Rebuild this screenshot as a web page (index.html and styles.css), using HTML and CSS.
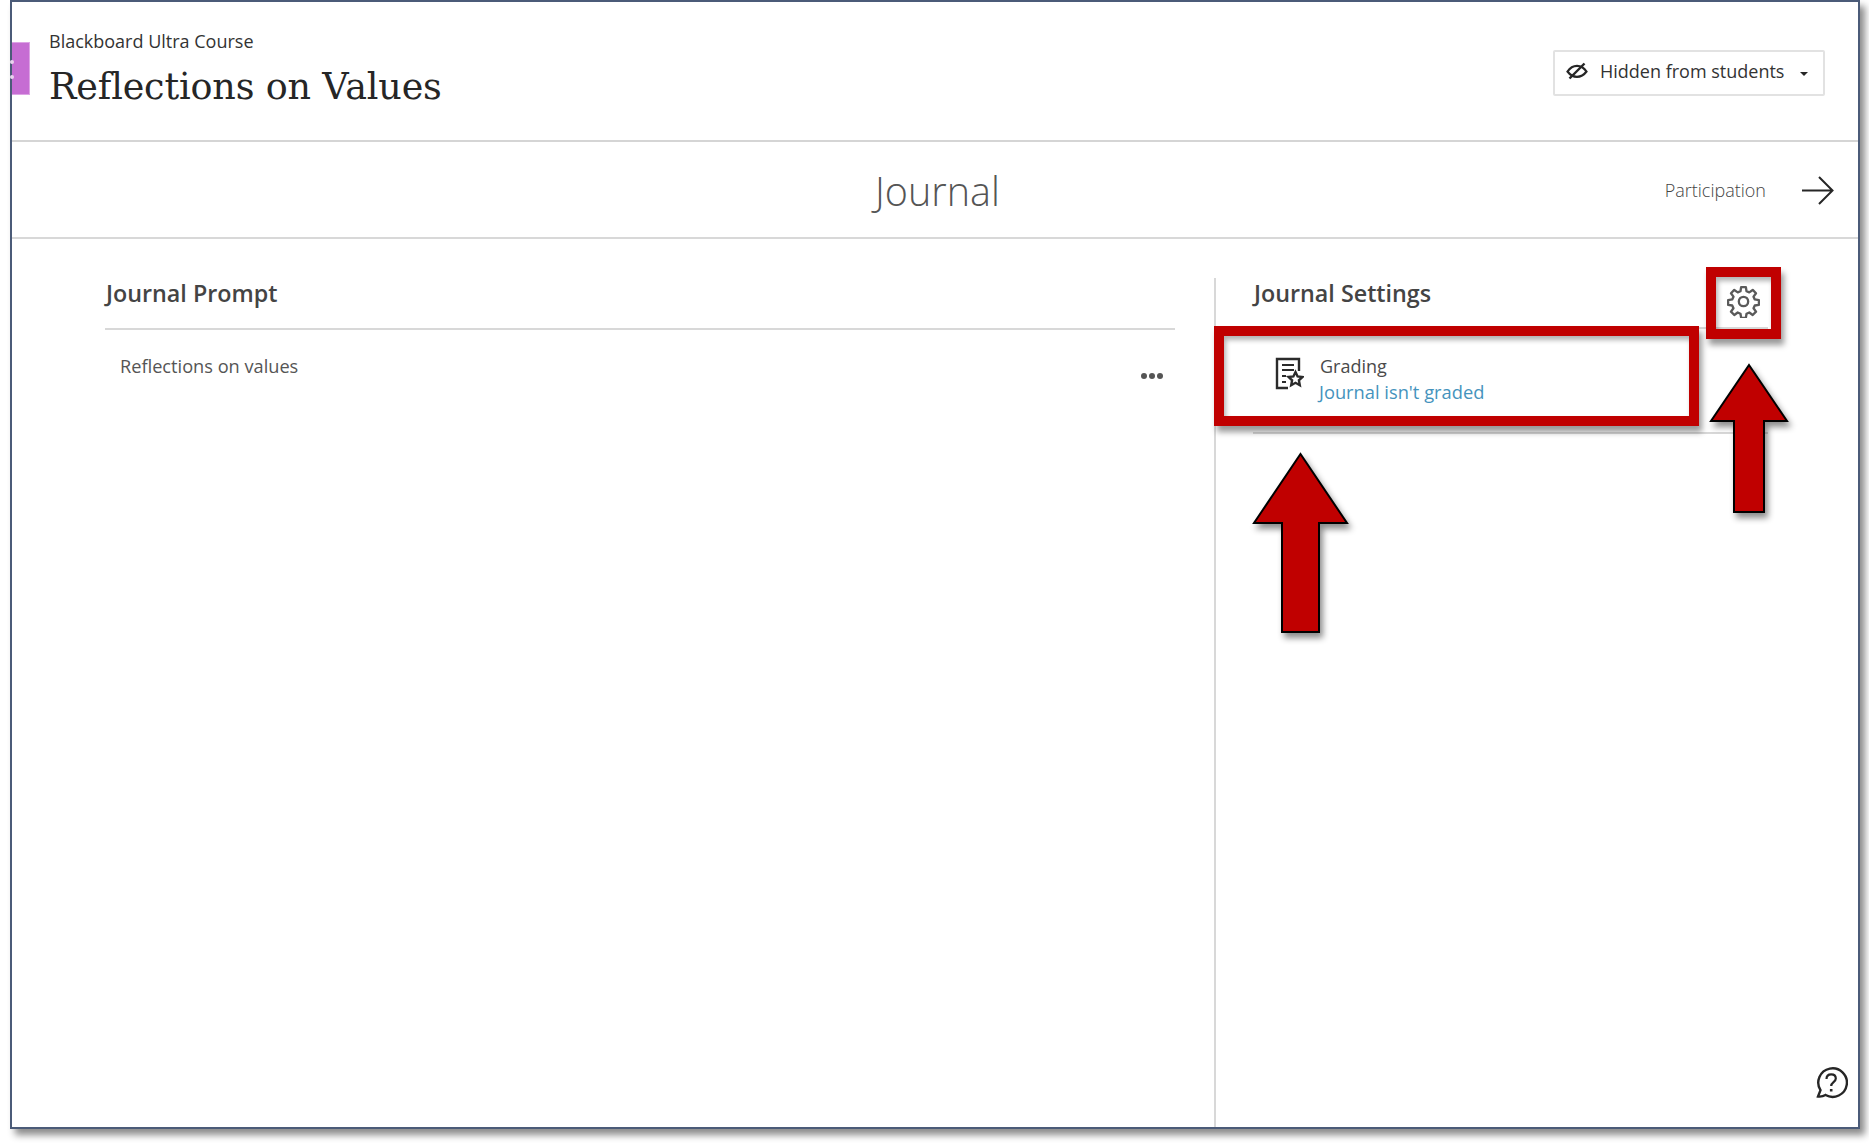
FILE: index.html
```html
<!DOCTYPE html>
<html lang="en">
<head>
<meta charset="utf-8">
<title>Reflections on Values</title>
<link rel="stylesheet" href="styles.css">
</head>
<body>
<div class="frame">
  <div class="tab"><i></i><i></i></div>
  <header class="top">
    <div class="titles">
      <div class="course">Blackboard Ultra Course</div>
      <h1 class="title">Reflections on Values</h1>
    </div>
    <button class="visibility">
      <svg class="eye" width="22" height="18" viewBox="0 0 22 18" fill="none" stroke="#262626" stroke-width="2.200"><path d="M1.500 9.500C4.500 5 8 3.800 11 3.800s6.500 1.200 9.500 5.700C17.500 13.500 14 14.800 11 14.800S4.500 13.500 1.500 9.500Z"/><path d="M3.500 16.500 18.500 1.500" stroke-width="2.400"/></svg>
      <span>Hidden from students</span>
      <span class="caret"></span>
    </button>
  </header>
  <nav class="subnav">
    <h2 class="page">Journal</h2>
    <div class="next">
      <span>Participation</span>
      <svg width="33" height="31" viewBox="0 0 33 31" fill="none" stroke="#262626" stroke-width="2"><path d="M1 15.500H31M18 2l13.500 13.500L18 29"/></svg>
    </div>
  </nav>
  <main class="body">
    <section class="prompt">
      <h3 class="head">Journal Prompt</h3>
      <div class="prompt-row">
        <span>Reflections on values</span>
        <span class="dots"><i></i><i></i><i></i></span>
      </div>
    </section>
    <aside class="settings">
      <div class="settings-inner">
        <div class="head head-settings">
          <h3>Journal Settings</h3>
          <svg class="gear" width="33" height="33" viewBox="0 0 24 24" fill="none" stroke="#5a5a5a" stroke-width="1.700" stroke-linejoin="round"><circle cx="12" cy="12" r="3.400"/><path d="M10.300 1.500h3.400l.5 3 2 .9 2.500-1.800 2.400 2.400-1.800 2.500.9 2 3 .5v3.400l-3 .5-.9 2 1.800 2.500-2.400 2.400-2.500-1.800-2 .9-.5 3h-3.400l-.5-3-2-.9-2.500 1.800-2.400-2.400 1.800-2.500-.9-2-3-.5v-3.400l3-.5.9-2-1.800-2.500 2.400-2.400 2.500 1.800 2-.9Z"/></svg>
        </div>
        <div class="grading">
          <svg class="grade-icon" width="29" height="33" viewBox="0 0 29 33" fill="none" stroke="#2b2b2b" stroke-width="2.400"><path d="M24 14V2H2v29h11"/><path d="M7 8h12M7 13h12M7 19h4M7 25h4" stroke-width="2.200"/><path d="m20.500 15 2.100 4.500 4.800.5-3.500 3.300.9 4.900-4.300-2.400-4.300 2.400.9-4.900-3.500-3.300 4.800-.5Z"/></svg>
          <div class="grade-text">
            <div class="grade-label">Grading</div>
            <a class="grade-link">Journal isn't graded</a>
          </div>
        </div>
      </div>
    </aside>
  </main>
  <svg class="help" width="34" height="34" viewBox="0 0 34 34" fill="none" stroke="#262626" stroke-width="2.400"><path d="M4 30.500l2.500-6.300A14.300 14.300 0 1 1 11.500 29C9 30.500 6.500 30.800 4 30.500Z"/><path d="M12.500 13c0-3 2-4.700 4.700-4.700s4.600 1.700 4.600 4.200c0 3.700-4.600 3.600-4.600 7.500" stroke-width="2.200"/><path d="M17.200 23v2.500" stroke-width="2.600"/></svg>
</div>

<div class="callout callout-gear"></div>
<div class="callout callout-grading"></div>
<svg class="arrows" width="1869" height="1146" viewBox="0 0 1869 1146">
  <defs><filter id="s" x="-30%" y="-30%" width="170%" height="170%"><feDropShadow dx="3" dy="5" stdDeviation="3" flood-color="#000" flood-opacity=".45"/></filter></defs>
  <path filter="url(#s)" fill="#c00000" stroke="#000" stroke-width="2" d="M1300.500 454 1347 523h-28v109h-37V523H1254Z"/>
  <path filter="url(#s)" fill="#c00000" stroke="#000" stroke-width="2" d="M1749 365 1787 421h-23v91h-30v-91h-23Z"/>
</svg>
</body>
</html>
```
FILE: styles.css
```css
* { box-sizing: border-box; }
html, body { margin: 0; padding: 0; background: #fff; }
body { width: 1869px; height: 1146px; overflow: hidden; font-family: "Open Sans", sans-serif; color: #333; }
h1, h2, h3 { margin: 0; font-weight: inherit; font-size: inherit; }

.frame {
  position: relative;
  display: flex;
  flex-direction: column;
  margin-left: 10px;
  width: 1850px;
  height: 1129px;
  background: #fff;
  border: 2px solid #4b5b78;
  box-shadow: 5px 6px 7px rgba(0, 0, 0, .45);
}

.tab {
  position: absolute;
  left: 0;
  top: 40px;
  width: 18px;
  height: 53px;
  background: #c66dd3;
  border: 1px solid #dda3e5;
  border-left: 0;
}
.tab i { position: absolute; left: -2px; width: 4px; height: 4px; border-radius: 50%; background: #e9d3ee; }
.tab i:first-child { top: 17px; }
.tab i:last-child { top: 32px; }

.top {
  flex: none;
  height: 140px;
  display: flex;
  justify-content: space-between;
  padding: 27px 33px 0 37px;
  border-bottom: 2px solid #d5d5d5;
}
.course { font-size: 18px; line-height: 24px; color: #333; }
.title { margin-top: 9px; font-family: "DejaVu Serif", serif; font-size: 36.500px; line-height: 50px; color: #262626; letter-spacing: -.15px; }

.visibility {
  display: flex;
  align-items: center;
  width: 272px;
  height: 46px;
  margin-top: 21px;
  padding: 0 0 4px 11px;
  background: #fff;
  border: 2px solid #e2e2e2;
  border-radius: 2px;
  font: 18px "Open Sans", sans-serif;
  color: #333;
}
.eye { margin-right: 12px; }
.caret { margin-left: 16px; margin-top: 6px; border: 4px solid transparent; border-top-color: #262626; border-bottom: 0; }

.subnav {
  flex: none;
  position: relative;
  display: flex;
  justify-content: center;
  align-items: center;
  height: 97px;
  border-bottom: 2px solid #d8d8d8;
}
.page { font-size: 39.500px; font-weight: 300; color: #555; margin: 3px 0 0 5px; }
.next {
  position: absolute;
  right: 24px;
  top: 32px;
  display: flex;
  align-items: center;
  gap: 35px;
  font-size: 18px;
  font-weight: 300;
  color: #444;
}
.next svg { margin-top: 1px; }

.body { flex: 1; display: flex; padding-top: 39px; }
.prompt { width: 1070px; margin-left: 93px; }
.head { height: 52px; padding-left: 1px; font-size: 23.300px; font-weight: 560; line-height: 30px; color: #444; border-bottom: 2px solid #d8d8d8; }
.prompt-row {
  display: flex;
  justify-content: space-between;
  padding: 23px 12px 0 15px;
  font-size: 18.200px;
  line-height: 26px;
  color: #555;
}
.dots { display: flex; gap: 2px; margin-top: 20px; height: 6px; }
.dots i { width: 6px; height: 6px; border-radius: 50%; background: #555; }

.settings { margin-left: 39px; width: 560px; padding-left: 37px; border-left: 2px solid #d8d8d8; }
.settings-inner { width: 515px; }
.head-settings { display: flex; justify-content: space-between; height: 51px; padding-right: 8px; }
.gear { margin-top: 7px; }

.grading {
  display: flex;
  height: 105px;
  padding: 28px 0 0 22px;
  border-bottom: 2px solid #d8d8d8;
}
.grade-icon { margin-right: 16px; }
.grade-text { margin-top: -4px; }
.grade-label { font-size: 18px; line-height: 26px; font-weight: 500; color: #4a4a4a; }
.grade-link { display: block; margin-left: -1px; font-size: 18.300px; line-height: 26px; color: #4593bd; }

.help { position: absolute; right: 10px; top: 1064px; }

.callout { position: absolute; background: transparent; border: solid #c00000; box-shadow: 3px 6px 6px rgba(0, 0, 0, .4), inset 2px 4px 5px rgba(0, 0, 0, .3); }
.callout-gear { left: 1706px; top: 267px; width: 75px; height: 72px; border-width: 10px; }
.callout-grading { left: 1214px; top: 326px; width: 485px; height: 100px; border-width: 10px; }
.arrows { position: absolute; left: 0; top: 0; pointer-events: none; }
```
